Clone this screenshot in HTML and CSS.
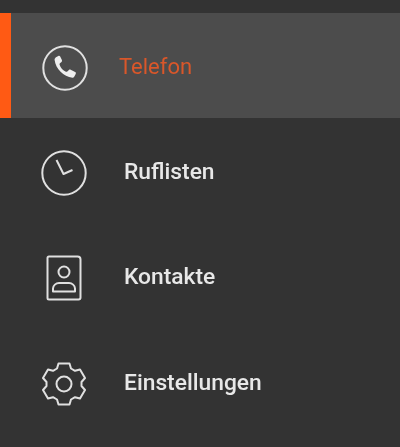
FILE: index.html
```html
<!DOCTYPE html>
<html lang="de">

<head>
    <meta charset="UTF-8">
    <meta name="viewport" content="width=device-width, initial-scale=1.0">
    <title>Telefon</title>
    <link rel="stylesheet" href="styles.css">
</head>

<body>

    <nav class="menu">
        <a class="menu-item active" href="#">
            <svg class="icon" viewBox="0 0 46 46">
                <circle cx="23" cy="23" r="21.7" />
                <path class="solid" d="M13.500 12.500l2.800-1.600c.8-.4 1.500-.2 1.900.6l1.700 3.600c.3.7.2 1.300-.4 1.800l-1.600 1.400c-.4.4-.5.8-.3 1.400 1 3 3.300 5.700 6.300 7 .5.2 1 .1 1.400-.3l1.600-1.500c.5-.5 1.200-.5 1.800-.2l4.400 2.400c.8.4 1 1.100.6 1.900l-1.500 2.700c-.4.7-1 1.100-1.800 1-8.800-.9-16.700-8.700-17.800-17.600-.1-.9.2-1.700.9-2.100z" />
            </svg>
            <span class="label">Telefon</span>
        </a>
        <a class="menu-item" href="#">
            <svg class="icon" viewBox="0 0 46 46">
                <circle cx="23" cy="23" r="21.7" />
                <path d="M15.500 10l7 14 9-4" />
            </svg>
            <span class="label">Ruflisten</span>
        </a>
        <a class="menu-item" href="#">
            <svg class="icon" viewBox="0 0 46 46">
                <path d="M8 1.500h28.500c2 0 3 1 3 3v38c0 1.200-.8 2-2 2H8c-1 0-1.500-.5-1.500-1.500V3c0-1 .5-1.500 1.500-1.500z" />
                <circle cx="23" cy="17" r="5.500" />
                <path d="M12 36.500v-3c0-3 3-5.500 6-5.500h10c3 0 6 2.500 6 5.500v3z" />
            </svg>
            <span class="label">Kontakte</span>
        </a>
        <a class="menu-item" href="#">
            <svg class="icon" viewBox="0 0 46 46">
                <circle cx="23" cy="23" r="7.500" />
                <path d="M17.500 2.500h11l1.500 5 4 2.300 5-1.300 5 8.500-3.500 4v4l3.500 4-5 8.500-5-1.300-4 2.300-1.500 5h-11l-1.500-5-4-2.300-5 1.300-5-8.500 3.500-4v-4l-3.500-4 5-8.500 5 1.300 4-2.300z" />
            </svg>
            <span class="label">Einstellungen</span>
        </a>
    </nav>

</body>

</html>
```

FILE: styles.css
```css
body {
    font-family: Roboto, Arial, sans-serif;
    margin: 0;
    padding: 0;
    background-color: #333;
}

.menu {
    padding-top: 13px;
}

.menu-item {
    display: flex;
    align-items: center;
    height: 105.400px;
    padding-left: 41px;
    color: #e8e8e8;
    font-size: 22.800px;
    font-weight: 500;
    text-decoration: none;
}

.menu-item.active {
    padding-left: 31px;
    border-left: 11px solid #ff5a14;
    background-color: #4c4c4c;
    color: #d9572a;
    font-size: 22px;
    font-weight: 400;
}

.label {
    padding-top: 1px;
    filter: blur(0.4px);
}

.icon {
    width: 46px;
    height: 46px;
    margin-top: 4px;
    margin-right: 37px;
    fill: none;
    stroke: #e0e0e0;
    stroke-width: 2;
    stroke-linejoin: round;
    flex-shrink: 0;
    filter: blur(0.4px);
}

.icon .solid {
    fill: #eee;
    stroke: none;
}

.active .icon {
    margin-right: 31px;
}
```
